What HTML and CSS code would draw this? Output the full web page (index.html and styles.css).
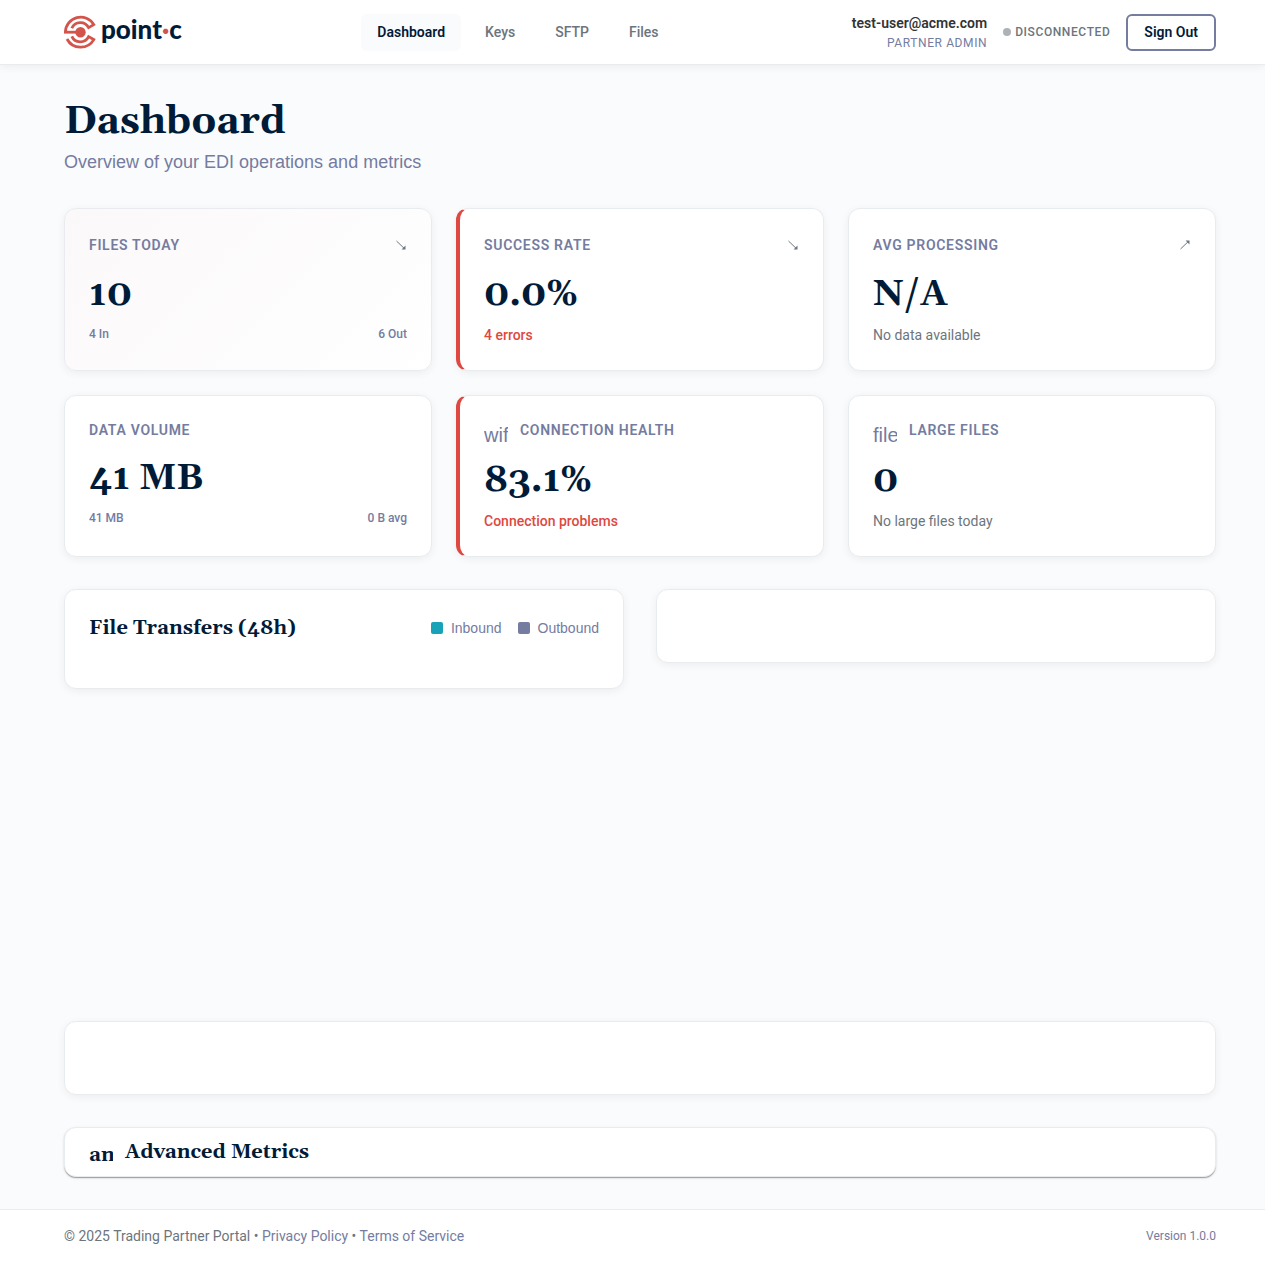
FILE: index.html
```html
<!DOCTYPE html>
<html lang="en">
<head>
<meta charset="utf-8">
<meta name="viewport" content="width=device-width, initial-scale=1">
<title>Dashboard - Trading Partner Portal</title>
<link rel="stylesheet" href="styles.css">
</head>
<body>
<header class="site-header">
  <a class="logo" href="#" aria-label="point-c home">
    <svg class="logo-mark" viewBox="0 0 32 34" aria-hidden="true">
      <g fill="none" stroke="#d3544a" stroke-width="2.8">
        <path d="M1.4 17A15.3 15.3 0 0 1 29.8 9.6L24.6 12.6A9.3 9.3 0 0 0 7.8 13.2"/>
        <path d="M0 17.2H12"/>
        <path d="M7.8 21.4A9.3 9.3 0 0 0 24.6 21.6L29.8 24.6A15.3 15.3 0 0 1 3 24"/>
      </g>
      <circle cx="16.5" cy="17.2" r="5.2" fill="#d3544a"/>
    </svg>
    <span class="logo-text">point<span class="logo-dot">·</span>c</span>
  </a>
  <nav class="nav" aria-label="Main">
    <a class="nav-link nav-link-active" href="#">Dashboard</a>
    <a class="nav-link" href="#">Keys</a>
    <a class="nav-link" href="#">SFTP</a>
    <a class="nav-link" href="#">Files</a>
  </nav>
  <div class="account">
    <div class="user">
      <span class="user-email">test-user@acme.com</span>
      <span class="user-role">Partner Admin</span>
    </div>
    <div class="status"><span class="status-dot"></span>Disconnected</div>
    <button class="sign-out" type="button">Sign Out</button>
  </div>
</header>

<main class="main">
  <h1 class="page-title">Dashboard</h1>
  <p class="page-subtitle">Overview of your EDI operations and metrics</p>

  <section class="metrics">
    <article class="card metric metric-primary">
      <div class="metric-head metric-head-trend">
        <h2 class="metric-title">Files Today</h2>
        <svg class="trend" viewBox="0 0 12 12" aria-hidden="true"><path d="M1.5 2L9 9.2" stroke="currentColor"/><path d="M10.5 6.6V10.6H6.6Z" fill="currentColor"/></svg>
      </div>
      <div class="metric-value">10</div>
      <div class="metric-split"><span>4 In</span><span>6 Out</span></div>
    </article>
    <article class="card metric metric-error">
      <div class="metric-head metric-head-trend">
        <h2 class="metric-title">Success Rate</h2>
        <svg class="trend" viewBox="0 0 12 12" aria-hidden="true"><path d="M1.5 2L9 9.2" stroke="currentColor"/><path d="M10.5 6.6V10.6H6.6Z" fill="currentColor"/></svg>
      </div>
      <div class="metric-value">0.0%</div>
      <div class="metric-note metric-note-error">4 errors</div>
    </article>
    <article class="card metric">
      <div class="metric-head metric-head-trend">
        <h2 class="metric-title">Avg Processing</h2>
        <svg class="trend" viewBox="0 0 12 12" aria-hidden="true"><path d="M1.5 10L9 2.8" stroke="currentColor"/><path d="M10.5 5.4V1.4H6.6Z" fill="currentColor"/></svg>
      </div>
      <div class="metric-value">N/A</div>
      <div class="metric-note">No data available</div>
    </article>
    <article class="card metric">
      <div class="metric-head">
        <h2 class="metric-title">Data Volume</h2>
      </div>
      <div class="metric-value">41 MB</div>
      <div class="metric-split"><span>41 MB</span><span>0 B avg</span></div>
    </article>
    <article class="card metric metric-error">
      <div class="metric-head">
        <span class="icon">wifi</span>
        <h2 class="metric-title">Connection Health</h2>
      </div>
      <div class="metric-value">83.1%</div>
      <div class="metric-note metric-note-error">Connection problems</div>
    </article>
    <article class="card metric">
      <div class="metric-head">
        <span class="icon">file</span>
        <h2 class="metric-title">Large Files</h2>
      </div>
      <div class="metric-value">0</div>
      <div class="metric-note">No large files today</div>
    </article>
  </section>

  <section class="charts">
    <article class="card chart">
      <div class="chart-head">
        <h2 class="section-title">File Transfers (48h)</h2>
        <ul class="legend">
          <li class="legend-item"><span class="swatch swatch-inbound"></span>Inbound</li>
          <li class="legend-item"><span class="swatch swatch-outbound"></span>Outbound</li>
        </ul>
      </div>
    </article>
    <article class="card chart chart-empty"></article>
  </section>

  <section class="card chart chart-empty"></section>

  <section class="card advanced">
    <span class="icon icon-serif">an</span>
    <h2 class="section-title">Advanced Metrics</h2>
  </section>
</main>

<footer class="site-footer">
  <p class="legal">© 2025 Trading Partner Portal • <a href="#">Privacy Policy</a> • <a href="#">Terms of Service</a></p>
  <p class="version">Version 1.0.0</p>
</footer>
</body>
</html>
```
FILE: styles.css
```css
:root {
  --navy: #001b38;
  --slate: #747c9f;
  --gray: #6c757d;
  --red: #de4841;
  --line: #e9ecef;
  --page: #fafbfd;
  --serif: Georgia, Gelasio, "Liberation Serif", serif;
  --sans: "Liberation Sans", Arial, sans-serif;
}

* {
  box-sizing: border-box;
}

body {
  margin: 0;
  min-height: 100vh;
  display: flex;
  flex-direction: column;
  background: var(--page);
  color: #333;
  font: 14px/20px Roboto, sans-serif;
}

h1, h2, p, ul {
  margin: 0;
  padding: 0;
}

a {
  color: inherit;
  text-decoration: none;
}

.site-header,
.main,
.site-footer {
  padding-left: 64px;
  padding-right: 49px;
}

.site-header {
  height: 65px;
  display: flex;
  align-items: center;
  justify-content: space-between;
  background: #fff;
  border-bottom: 1px solid var(--line);
  box-shadow: 0 2px 8px rgba(0, 0, 0, 0.06);
}

.logo {
  display: flex;
  align-items: center;
  gap: 5px;
  width: 120px;
}

.logo-mark {
  width: 32px;
  height: 34px;
  flex: none;
}

.logo-text {
  padding-bottom: 6px;
  color: var(--navy);
  font: 900 26px/32px Lato, sans-serif;
}

.logo-dot {
  color: #d3544a;
}

.nav {
  display: flex;
  gap: 8px;
}

.nav-link {
  padding: 8px 16px 9px;
  border-radius: 6px;
  color: var(--gray);
  font-weight: 500;
}

.nav-link-active {
  background: var(--page);
  color: var(--navy);
  font-weight: 600;
}

.account {
  display: flex;
  align-items: center;
  gap: 16px;
}

.user {
  display: flex;
  flex-direction: column;
  align-items: flex-end;
  padding-top: 2px;
}

.user-email {
  font-weight: 600;
}

.user-role {
  color: var(--slate);
  font-size: 12px;
  letter-spacing: 0.05em;
  text-transform: uppercase;
}

.status {
  display: flex;
  align-items: center;
  gap: 4px;
  color: var(--gray);
  font-size: 12px;
  font-weight: 500;
  letter-spacing: 0.05em;
  text-transform: uppercase;
}

.status-dot {
  width: 8px;
  height: 8px;
  border-radius: 50%;
  background: #adb2b7;
}

.sign-out {
  padding: 7px 16px;
  border: 2px solid var(--slate);
  border-radius: 6px;
  background: #fff;
  color: var(--navy);
  font: 600 14px/19px Roboto, sans-serif;
}

.main {
  flex: 1;
  display: flex;
  flex-direction: column;
  padding-top: 32px;
  padding-bottom: 32px;
}

.page-title {
  color: var(--navy);
  font: 700 39px/50px var(--serif);
}

.page-subtitle {
  margin: 2px 0 32px;
  color: var(--slate);
  font: 18px/27px var(--sans);
}

.card {
  background: #fff;
  border: 1px solid var(--line);
  border-radius: 12px;
  box-shadow: 0 2px 8px rgba(0, 0, 0, 0.06);
}

.metrics {
  display: grid;
  grid-template-columns: repeat(3, 1fr);
  gap: 24px;
}

.metric {
  padding: 24px;
}

.metric-primary {
  background: linear-gradient(135deg, #fbf8f9 0%, #fff 100%);
}

.metric-error {
  border-left: 4px solid var(--red);
}

.metric-head {
  display: flex;
  gap: 12px;
  margin-bottom: 14px;
}

.metric-head-trend {
  height: 24px;
  align-items: center;
  justify-content: space-between;
}

.metric-title {
  color: var(--slate);
  font-size: 14px;
  line-height: 21px;
  font-weight: 600;
  letter-spacing: 0.05em;
  text-transform: uppercase;
}

.trend {
  width: 12px;
  height: 12px;
  color: var(--gray);
}

.metric-value {
  margin-bottom: 6px;
  color: var(--navy);
  font: 700 36px/48px var(--serif);
}

.metric-split {
  display: flex;
  justify-content: space-between;
  color: var(--slate);
  font-size: 12px;
  line-height: 18px;
  font-weight: 500;
}

.metric-note {
  color: var(--gray);
  line-height: 21px;
}

.metric-note-error {
  color: var(--red);
  font-weight: 500;
}

.icon {
  flex: none;
  width: 24px;
  height: 23px;
  overflow: hidden;
  color: var(--slate);
  font: 20px/30px var(--sans);
}

.icon-serif {
  color: var(--navy);
  font: 700 20px/32px var(--serif);
}

.charts {
  display: grid;
  grid-template-columns: repeat(2, 1fr);
  gap: 32px;
  align-items: start;
  min-height: 400px;
  margin: 32px 0;
}

.chart {
  padding: 24px;
}

.chart-head {
  display: flex;
  align-items: center;
  justify-content: space-between;
  padding-bottom: 22px;
}

.chart-empty {
  min-height: 74px;
}

.section-title {
  color: var(--navy);
  font: 700 20px/28px var(--serif);
}

.legend {
  display: flex;
  gap: 16px;
  list-style: none;
}

.legend-item {
  display: flex;
  align-items: center;
  gap: 8px;
  color: var(--slate);
  font-family: var(--sans);
}

.swatch {
  width: 12px;
  height: 12px;
  border-radius: 2px;
}

.swatch-inbound {
  background: #17a2b8;
}

.swatch-outbound {
  background: var(--slate);
}

.advanced {
  display: flex;
  gap: 12px;
  margin-top: 32px;
  padding: 10px 24px;
  box-shadow: 0 2px 1px -1px rgba(0, 0, 0, 0.2), 0 1px 1px rgba(0, 0, 0, 0.14), 0 1px 3px rgba(0, 0, 0, 0.12);
}

.advanced .icon {
  height: 28px;
  line-height: 34px;
}

.site-footer {
  display: flex;
  align-items: center;
  justify-content: space-between;
  padding-top: 16px;
  padding-bottom: 17px;
  background: #fff;
  border-top: 1px solid var(--line);
}

.legal {
  color: var(--gray);
}

.legal a {
  color: var(--slate);
}

.version {
  color: var(--slate);
  font-size: 12px;
}
```
